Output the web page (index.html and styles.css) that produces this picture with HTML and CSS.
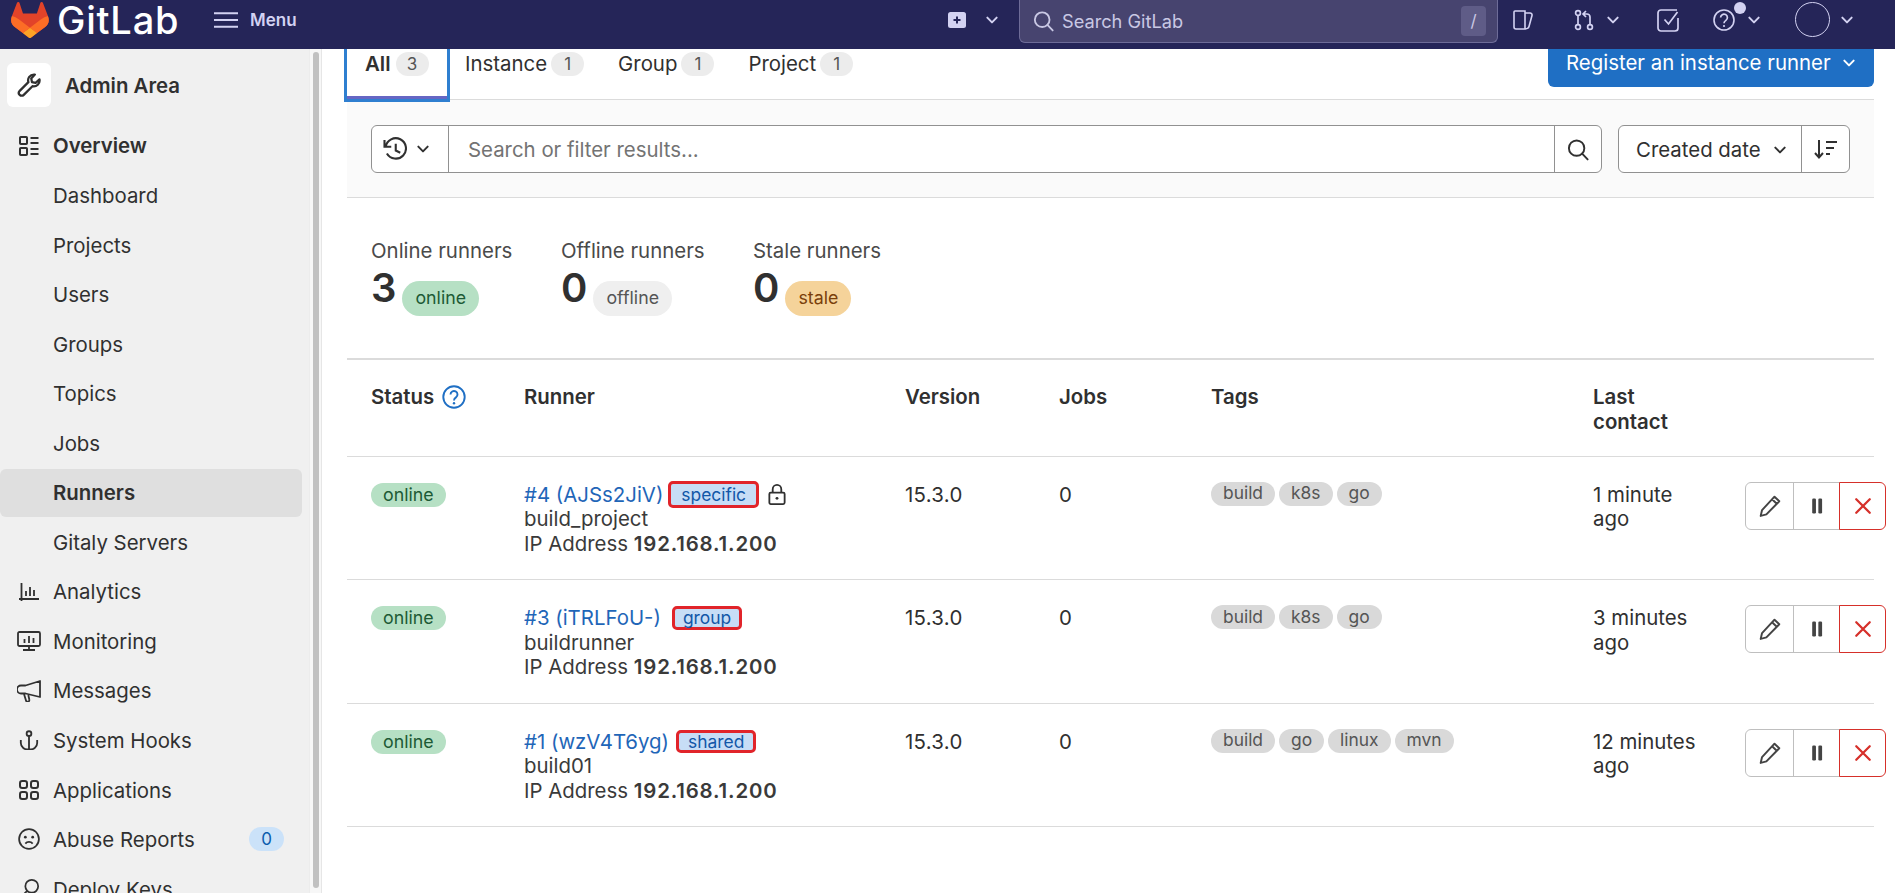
FILE: index.html
```html
<!DOCTYPE html>
<html lang="en">
<head>
<meta charset="utf-8">
<title>Runners · Admin Area · GitLab</title>
<link rel="stylesheet" href="styles.css">
</head>
<body>
<svg class="sprite" aria-hidden="true">
  <symbol id="i-chev" viewBox="0 0 12 12"><path d="M2 4l4 4 4-4" fill="none" stroke="currentColor" stroke-width="1.7" stroke-linecap="round" stroke-linejoin="round"/></symbol>
  <symbol id="i-search" viewBox="0 0 16 16"><circle cx="7" cy="7" r="5.6" fill="none" stroke="currentColor" stroke-width="1.4"/><path d="M11 11l4 4.2" fill="none" stroke="currentColor" stroke-width="1.4" stroke-linecap="round"/></symbol>
  <symbol id="i-pencil" viewBox="0 0 16 16"><path d="M11 1.8l3.2 3L5.6 13.6 1.8 14.6l.9-3.9zM9.4 3.5l3.1 3" fill="none" stroke="currentColor" stroke-width="1.3" stroke-linejoin="round"/></symbol>
  <symbol id="i-pause" viewBox="0 0 16 16"><rect x="4.8" y="3" width="2.5" height="10" rx=".8" fill="currentColor"/><rect x="8.900" y="3" width="2.5" height="10" rx=".8" fill="currentColor"/></symbol>
  <symbol id="i-close" viewBox="0 0 16 16"><path d="M3.500 3.500l9 9M12.500 3.500l-9 9" fill="none" stroke="currentColor" stroke-width="1.5" stroke-linecap="round"/></symbol>
</svg>

<header class="topbar">
  <div class="brand">
    <svg class="logo" viewBox="0 0 25 24" aria-hidden="true">
      <path fill="#E24329" d="m24.507 9.5-.034-.09L21.082.562a.896.896 0 0 0-1.694.091l-2.29 7.01H7.825L5.535.653a.898.898 0 0 0-1.694-.09L.451 9.411.416 9.5a6.297 6.297 0 0 0 2.09 7.278l.012.01.03.022 5.16 3.867 2.56 1.935 1.554 1.176a1.051 1.051 0 0 0 1.268 0l1.555-1.176 2.56-1.935 5.197-3.89.014-.01A6.297 6.297 0 0 0 24.507 9.5Z"/>
      <path fill="#FC6D26" d="m24.507 9.5-.034-.09a11.44 11.44 0 0 0-4.56 2.051l-7.447 5.632 4.742 3.584 5.197-3.89.014-.01A6.297 6.297 0 0 0 24.507 9.5Z"/>
      <path fill="#FCA326" d="m7.707 20.677 2.56 1.935 1.555 1.176a1.051 1.051 0 0 0 1.268 0l1.555-1.176 2.56-1.935-4.743-3.584-4.755 3.584Z"/>
      <path fill="#FC6D26" d="M5.01 11.461a11.43 11.43 0 0 0-4.56-2.05L.416 9.5a6.297 6.297 0 0 0 2.09 7.278l.012.01.03.022 5.16 3.867 4.745-3.584-7.444-5.632Z"/>
    </svg>
    <span class="wordmark">GitLab</span>
  </div>
  <div class="menu">
    <svg class="burger" viewBox="0 0 24 16" aria-hidden="true"><path d="M0 1.2h24M0 8h24M0 14.8h24" stroke="currentColor" stroke-width="2"/></svg>
    <span>Menu</span>
  </div>
  <div class="top-right">
    <svg class="plus" viewBox="0 0 18 16" aria-hidden="true"><rect width="18" height="16" rx="2.5" fill="#d3d2f2"/><path d="M9 4.5v7M5.5 8h7" stroke="#252558" stroke-width="2"/></svg>
    <svg class="chev c-plus"><use href="#i-chev"/></svg>
    <div class="topsearch">
      <svg class="ts-icon"><use href="#i-search"/></svg>
      <span class="ts-text">Search GitLab</span>
      <kbd class="ts-key">/</kbd>
    </div>
    <svg class="nav-i i-issues" viewBox="0 0 21 20" aria-hidden="true"><path d="M2 1h10v18H3a2 2 0 0 1-2-2V2a1 1 0 0 1 1-1zM12 3h5a2 2 0 0 1 2 2.500l-3 11a3 3 0 0 1-4 2" fill="none" stroke="currentColor" stroke-width="1.6"/></svg>
    <svg class="nav-i i-mr" viewBox="0 0 22 22" aria-hidden="true"><g fill="none" stroke="currentColor" stroke-width="1.7"><circle cx="5" cy="4" r="2.4"/><circle cx="5" cy="18" r="2.4"/><circle cx="17" cy="18" r="2.4"/><path d="M5 6.5v9M17 15.500V8a3 3 0 0 0-3-3h-3M13 2l-3 3 3 3"/></g></svg>
    <svg class="chev c-mr"><use href="#i-chev"/></svg>
    <svg class="nav-i i-todo" viewBox="0 0 23 23" aria-hidden="true"><path d="M21 9v10a3 3 0 0 1-3 3H4a3 3 0 0 1-3-3V4a3 3 0 0 1 3-3h16" fill="none" stroke="currentColor" stroke-width="1.7"/><path d="M7.500 10.500l4 4.500 9-12" fill="none" stroke="currentColor" stroke-width="1.7"/></svg>
    <div class="help">
      <svg class="nav-i i-help" viewBox="0 0 22 22" aria-hidden="true"><circle cx="11" cy="11" r="10" fill="none" stroke="currentColor" stroke-width="1.6"/><path d="M7.600 8.600a3.400 3.400 0 1 1 5.300 2.800c-1.200.8-1.900 1.400-1.900 2.800" fill="none" stroke="currentColor" stroke-width="1.7"/><circle cx="11" cy="17" r="1.100" fill="currentColor"/></svg>
      <span class="help-dot"></span>
    </div>
    <svg class="chev c-help"><use href="#i-chev"/></svg>
    <span class="avatar"></span>
    <svg class="chev c-avatar"><use href="#i-chev"/></svg>
  </div>
</header>

<div class="shell">
  <aside class="sidebar">
    <nav class="side-inner">
      <div class="ctx">
        <span class="ctx-tile">
          <svg class="ctx-icon" viewBox="0 0 16 16" aria-hidden="true"><path d="M11.300 1a3.900 3.900 0 0 0-3.700 5.100L1.800 11.900a1.900 1.900 0 0 0 2.700 2.700l5.800-5.800A3.900 3.900 0 0 0 15 4.300l-2.600 2.300-2.400-.5-.5-2.400L11.900 1z" fill="none" stroke="#303030" stroke-width="1.500" stroke-linejoin="round"/></svg>
        </span>
        <span class="ctx-title">Admin Area</span>
      </div>
      <a class="item parent">
        <svg class="s-icon" viewBox="0 0 20 20" aria-hidden="true"><g fill="none" stroke="currentColor" stroke-width="2"><rect x="1" y="1" width="7" height="7" rx=".8"/><rect x="1" y="12" width="7" height="7" rx=".8"/><path d="M11.500 2h8M11.500 7h8M11.500 13h8M11.500 18h8"/></g></svg>
        <span class="label">Overview</span>
      </a>
      <a class="item"><span class="s-gap"></span><span class="label">Dashboard</span></a>
      <a class="item"><span class="s-gap"></span><span class="label">Projects</span></a>
      <a class="item"><span class="s-gap"></span><span class="label">Users</span></a>
      <a class="item"><span class="s-gap"></span><span class="label">Groups</span></a>
      <a class="item"><span class="s-gap"></span><span class="label">Topics</span></a>
      <a class="item"><span class="s-gap"></span><span class="label">Jobs</span></a>
      <a class="item active"><span class="s-gap"></span><span class="label">Runners</span></a>
      <a class="item"><span class="s-gap"></span><span class="label">Gitaly Servers</span></a>
      <a class="item">
        <svg class="s-icon" viewBox="0 0 20 20" aria-hidden="true"><path d="M2.500 1v18M0 17h20M7 9v5M11 5v9M15 8v6" fill="none" stroke="currentColor" stroke-width="1.8"/></svg>
        <span class="label">Analytics</span>
      </a>
      <a class="item">
        <svg class="s-icon wide" viewBox="0 0 24 20" aria-hidden="true"><g fill="none" stroke="currentColor" stroke-width="1.8"><rect x="1" y="1" width="22" height="14" rx="1.500"/><path d="M12 15v4M6 19h12M7.500 8v4M12 5v7M16.500 7v5"/></g></svg>
        <span class="label">Monitoring</span>
      </a>
      <a class="item">
        <svg class="s-icon wide" viewBox="0 0 24 22" aria-hidden="true"><g fill="none" stroke="currentColor" stroke-width="1.8" stroke-linejoin="round"><path d="M23 1v16L8.500 13.500H4a3 3 0 0 1 0-8h4.500z"/><path d="M7 14l2 6.500a1.700 1.700 0 0 0 3.300-1l-1-4.500"/></g></svg>
        <span class="label">Messages</span>
      </a>
      <a class="item">
        <svg class="s-icon" viewBox="0 0 22 22" aria-hidden="true"><g fill="none" stroke="currentColor" stroke-width="2"><circle cx="11" cy="4" r="2.600"/><path d="M11 7v14M2 11v3a7 7 0 0 0 9 7 7 7 0 0 0 9-7v-3"/></g></svg>
        <span class="label">System Hooks</span>
      </a>
      <a class="item">
        <svg class="s-icon" viewBox="0 0 20 20" aria-hidden="true"><g fill="none" stroke="currentColor" stroke-width="2"><rect x="1" y="1" width="7" height="7" rx="2.200"/><rect x="12" y="1" width="7" height="7" rx="2.200"/><rect x="1" y="12" width="7" height="7" rx="2.200"/><rect x="12" y="12" width="7" height="7" rx="2.200"/></g></svg>
        <span class="label">Applications</span>
      </a>
      <a class="item">
        <svg class="s-icon wide" viewBox="0 0 24 24" aria-hidden="true"><circle cx="12" cy="12" r="10.800" fill="none" stroke="currentColor" stroke-width="1.900"/><circle cx="8" cy="10" r="1.500" fill="currentColor"/><circle cx="16" cy="10" r="1.500" fill="currentColor"/><path d="M8 17c2-2.500 6-2.500 8 0" fill="none" stroke="currentColor" stroke-width="1.900"/></svg>
        <span class="label">Abuse Reports</span>
        <span class="count">0</span>
      </a>
      <a class="item">
        <svg class="s-icon wide" viewBox="0 0 24 24" aria-hidden="true"><g fill="none" stroke="currentColor" stroke-width="1.900"><circle cx="15" cy="9" r="7"/><path d="M10 14L2 22M6 18l3 3"/></g></svg>
        <span class="label">Deploy Keys</span>
      </a>
    </nav>
    <div class="track"><div class="thumb"></div></div>
  </aside>

  <main class="main">
    <div class="tabbar">
      <ul class="tabs">
        <li class="tab current"><span>All</span><span class="tab-count">3</span></li>
        <li class="tab"><span>Instance</span><span class="tab-count">1</span></li>
        <li class="tab"><span>Group</span><span class="tab-count">1</span></li>
        <li class="tab"><span>Project</span><span class="tab-count">1</span></li>
      </ul>
      <button class="register">
        <span>Register an instance runner</span>
        <svg class="chev"><use href="#i-chev"/></svg>
      </button>
    </div>

    <div class="filterbar">
      <div class="filter">
        <div class="history">
          <svg class="hist-icon" viewBox="0 0 16 16" aria-hidden="true"><path d="M1.800 6.500A6.800 6.800 0 1 1 2.600 11M1 2v4.500h4.500M8.500 4.500V9l3 1.500" fill="none" stroke="currentColor" stroke-width="1.400"/></svg>
          <svg class="chev"><use href="#i-chev"/></svg>
        </div>
        <div class="filter-input">Search or filter results...</div>
        <div class="filter-go"><svg class="fg-icon"><use href="#i-search"/></svg></div>
      </div>
      <div class="sort">
        <div class="sort-by"><span>Created date</span><svg class="chev"><use href="#i-chev"/></svg></div>
        <div class="sort-dir">
          <svg class="sd-icon" viewBox="0 0 24 20" aria-hidden="true"><path d="M5 1v17M1 14l4 4.500 4-4.500M12 3h11M12 9h8M12 15h4" fill="none" stroke="currentColor" stroke-width="2"/></svg>
        </div>
      </div>
    </div>

    <section class="stats">
      <div class="stat stat-online">
        <div class="stat-label">Online runners</div>
        <div class="stat-value"><b>3</b><span class="pill big online">online</span></div>
      </div>
      <div class="stat stat-offline">
        <div class="stat-label">Offline runners</div>
        <div class="stat-value"><b>0</b><span class="pill big offline">offline</span></div>
      </div>
      <div class="stat">
        <div class="stat-label">Stale runners</div>
        <div class="stat-value"><b>0</b><span class="pill big stale">stale</span></div>
      </div>
    </section>

    <section class="runners">
      <div class="row head">
        <div class="status-head">Status
          <svg class="q" viewBox="0 0 24 24" aria-hidden="true"><circle cx="12" cy="12" r="10.700" fill="none" stroke="#1f6fc4" stroke-width="1.900"/><path d="M8.500 9.500a3.500 3.500 0 1 1 5.500 2.900c-1.300.9-2 1.500-2 3" fill="none" stroke="#1f6fc4" stroke-width="1.900"/><circle cx="12" cy="18.300" r="1.200" fill="#1f6fc4"/></svg>
        </div>
        <div>Runner</div>
        <div>Version</div>
        <div>Jobs</div>
        <div>Tags</div>
        <div>Last<br>contact</div>
        <div></div>
      </div>

      <div class="row body">
        <div><span class="pill online">online</span></div>
        <div class="runner">
          <div class="r-title"><a class="r-link">#4 (AJSs2JiV)</a><span class="type t-specific">specific</span>
            <svg class="lock" viewBox="0 0 18 22" aria-hidden="true"><g fill="none" stroke="#303030" stroke-width="1.900"><rect x="1" y="9" width="16" height="12" rx="1.500"/><path d="M4.500 9V5.500a4.500 4.500 0 0 1 9 0V9"/></g><circle cx="9" cy="15" r="1.500" fill="#303030"/></svg>
          </div>
          <div>build_project</div>
          <div>IP Address <b class="ip">192.168.1.200</b></div>
        </div>
        <div class="cell ver">15.3.0</div>
        <div class="cell">0</div>
        <div class="tags"><span class="tag">build</span><span class="tag">k8s</span><span class="tag">go</span></div>
        <div class="cell">1 minute<br>ago</div>
        <div class="actions">
          <button class="act"><svg class="act-i"><use href="#i-pencil"/></svg></button>
          <button class="act"><svg class="act-i"><use href="#i-pause"/></svg></button>
          <button class="act danger"><svg class="act-i"><use href="#i-close"/></svg></button>
        </div>
      </div>

      <div class="row body">
        <div><span class="pill online">online</span></div>
        <div class="runner">
          <div class="r-title"><a class="r-link">#3 (iTRLFoU-)</a><span class="type t-group">group</span></div>
          <div>buildrunner</div>
          <div>IP Address <b class="ip">192.168.1.200</b></div>
        </div>
        <div class="cell ver">15.3.0</div>
        <div class="cell">0</div>
        <div class="tags"><span class="tag">build</span><span class="tag">k8s</span><span class="tag">go</span></div>
        <div class="cell">3 minutes<br>ago</div>
        <div class="actions">
          <button class="act"><svg class="act-i"><use href="#i-pencil"/></svg></button>
          <button class="act"><svg class="act-i"><use href="#i-pause"/></svg></button>
          <button class="act danger"><svg class="act-i"><use href="#i-close"/></svg></button>
        </div>
      </div>

      <div class="row body">
        <div><span class="pill online">online</span></div>
        <div class="runner">
          <div class="r-title"><a class="r-link">#1 (wzV4T6yg)</a><span class="type t-shared">shared</span></div>
          <div>build01</div>
          <div>IP Address <b class="ip">192.168.1.200</b></div>
        </div>
        <div class="cell ver">15.3.0</div>
        <div class="cell">0</div>
        <div class="tags"><span class="tag">build</span><span class="tag">go</span><span class="tag">linux</span><span class="tag">mvn</span></div>
        <div class="cell">12 minutes<br>ago</div>
        <div class="actions">
          <button class="act"><svg class="act-i"><use href="#i-pencil"/></svg></button>
          <button class="act"><svg class="act-i"><use href="#i-pause"/></svg></button>
          <button class="act danger"><svg class="act-i"><use href="#i-close"/></svg></button>
        </div>
      </div>
    </section>
  </main>
</div>
</body>
</html>
```

FILE: styles.css
```css
* { box-sizing: border-box; }
html, body { margin: 0; height: 100%; overflow: hidden; }
body { font-family: Inter, "Noto Sans", sans-serif; font-size: 20.4px; color: #303030; background: #fff; line-height: 24.6px; }
button { font: inherit; }
.sprite { display: none; }
.chev { width: 14px; height: 14px; flex: none; color: inherit; }

/* top bar */
.topbar { height: 49px; padding-bottom: 9px; background: #252558; display: flex; align-items: center; color: #d3d2f2; }
.brand { display: flex; align-items: center; width: 214px; padding-left: 11px; flex: none; }
.logo { width: 38px; height: 36px; flex: none; }
.wordmark { color: #fff; font-size: 38px; font-weight: 500; letter-spacing: .8px; margin-left: 8px; line-height: 40px; }
.menu { display: flex; align-items: center; gap: 12px; font-size: 17px; font-weight: 600; width: 120px; flex: none; }
.burger { width: 24px; height: 16px; }
.top-right { display: flex; align-items: center; margin-left: auto; height: 40px; padding-right: 41px; }
.plus { width: 18px; height: 16px; }
.c-plus { margin-left: 19px; }
.topsearch { width: 479px; height: 43px; align-self: flex-start; margin-left: 20px; background: #47446f; border: 1px solid #6e6c98; border-top: 0; border-radius: 0 0 6px 6px; display: flex; align-items: center; padding-left: 13px; color: #c9c8e4; }
.ts-icon { width: 21px; height: 22px; flex: none; }
.ts-text { margin-left: 8px; font-size: 18.2px; }
.ts-key { margin-left: auto; margin-right: 11px; width: 25px; height: 30px; background: #5f5c87; border-radius: 4px; display: flex; align-items: center; justify-content: center; font: 400 17px Inter, sans-serif; }
.nav-i { flex: none; }
.i-issues { width: 21px; height: 20px; margin-left: 15px; }
.i-mr { width: 22px; height: 22px; margin-left: 39px; }
.c-mr { margin-left: 11px; }
.i-todo { width: 23px; height: 23px; margin-left: 37px; }
.help { position: relative; margin-left: 33px; width: 22px; height: 22px; }
.i-help { width: 22px; height: 22px; display: block; }
.help-dot { position: absolute; top: -7px; right: -11px; width: 12px; height: 12px; border-radius: 50%; background: #d3d2f2; }
.c-help { margin-left: 12px; }
.avatar { width: 35px; height: 35px; border: 1px solid #d3d2f2; border-radius: 50%; margin-left: 34px; margin-top: -2px; flex: none; }
.c-avatar { margin-left: 10px; }

/* shell */
.shell { display: flex; height: 844px; }

/* sidebar */
.sidebar { width: 322px; flex: none; display: flex; background: #f0f0f0; overflow: hidden; }
.side-inner { width: 309px; flex: none; padding-top: 14px; }
.track { width: 13px; flex: none; background: #f7f7f7; padding: 3px 2px 5px 3px; border-left: 1px solid #ececec; border-right: 1px solid #e6e6e6; }
.thumb { height: 100%; background: #c1c1c1; border-radius: 4px; }
.ctx { display: flex; align-items: center; height: 44px; padding-left: 7px; margin-bottom: 14px; }
.ctx-tile { width: 44px; height: 44px; background: #fff; border-radius: 6px; display: flex; align-items: center; justify-content: center; }
.ctx-icon { width: 24px; height: 24px; }
.ctx-title { margin-left: 14px; margin-top: 2px; font-weight: 600; font-size: 20.4px; }
.item { display: flex; align-items: center; height: 49.55px; padding-left: 19px; margin-right: 7px; border-radius: 6px; white-space: nowrap; }
.label { padding-top: 2px; }
.item.parent { font-weight: 600; }
.item.active { background: #dfdfdf; font-weight: 600; height: 48px; margin-top: .78px; margin-bottom: .77px; }
.s-icon { width: 20px; height: 20px; flex: none; margin-right: 14px; color: #303030; }
.s-icon.wide { width: 24px; height: 22px; margin-left: -2px; margin-right: 12px; }
.s-gap { width: 34px; flex: none; }
.count { margin-left: auto; margin-right: 18px; width: 35px; height: 24px; background: #cbe2f9; color: #0b5cad; border-radius: 12px; font-size: 17px; display: flex; align-items: center; justify-content: center; }

/* main */
.main { flex: 1; min-width: 0; padding: 0 21px 0 25px; overflow: hidden; }
.tabbar { display: flex; justify-content: space-between; height: 51px; border-bottom: 1px solid #dbdbdb; }
.tabs { list-style: none; margin: 0; padding: 0; display: flex; }
.tab { display: flex; align-items: flex-start; padding-top: 3px; height: 50px; padding-left: 18px; padding-right: 16px; gap: 4px; }
.tab.current { font-weight: 600; width: 100px; padding-left: 18px; gap: 5px; box-shadow: 0 0 0 3px #2f7fd0, inset 0 -3px 0 #6666c4; position: relative; z-index: 1; }
.tab-count { width: 33px; height: 24px; background: #ececec; color: #555; font-weight: 400; font-size: 17px; border-radius: 12px; display: flex; align-items: center; justify-content: center; }
.register { width: 326px; height: 38px; background: #1f6fc4; color: #fff; border: 0; border-radius: 0 0 6px 6px; display: flex; align-items: center; justify-content: space-between; padding: 0 18px 10px; }

.filterbar { height: 98px; background: #fafafa; border-bottom: 1px solid #dbdbdb; padding: 25px 24px 0; display: flex; gap: 16px; }
.filter, .sort { display: flex; height: 48px; background: #fff; border: 1px solid #919191; border-radius: 6px; }
.filter { width: 1231px; flex: none; }
.sort { width: 232px; flex: none; }
.history { width: 77px; flex: none; display: flex; align-items: center; gap: 9px; padding-left: 11px; border-right: 1px solid #919191; }
.hist-icon { width: 24px; height: 24px; flex: none; }
.filter-input { flex: 1; padding: 2px 0 0 19px; color: #737373; display: flex; align-items: center; }
.filter-go { width: 47px; flex: none; border-left: 1px solid #919191; display: flex; align-items: center; justify-content: center; }
.fg-icon { width: 22px; height: 23px; }
.sort-by { flex: 1; display: flex; align-items: center; gap: 12px; padding: 2px 0 0 17px; border-right: 1px solid #919191; }
.sort-dir { width: 47px; flex: none; display: flex; align-items: center; justify-content: center; }
.sd-icon { width: 24px; height: 20px; }

/* stats */
.stats { display: flex; padding: 41px 0 0 24px; height: 162px; border-bottom: 2px solid #dbdbdb; }
.stat-online { width: 190px; }
.stat-offline { width: 192px; }
.stat-label { color: #4a4a4a; }
.stat-value { display: flex; align-items: flex-start; }
.stat-value b { font-size: 40px; font-weight: 600; line-height: 47px; }
.pill { display: inline-flex; align-items: center; justify-content: center; height: 24px; padding: 0 12px; border-radius: 12px; font-size: 17.8px; }
.pill.big { height: 35px; border-radius: 18px; padding: 0 13px; margin: 17px 0 0 6px; }
.online { background: #b6e0c4; color: #1d5a35; }
.offline { background: #efefef; color: #555; }
.stale { background: #f5d39a; color: #7a3f0b; }

/* table */
.row { display: grid; grid-template-columns: 153px 381px 154px 152px 382px 153px 140px; padding-left: 24px; }
.head { height: 96.5px; padding-top: 25px; font-weight: 600; border-bottom: 1px solid #dbdbdb; }
.status-head { display: flex; align-items: flex-start; gap: 8px; }
.q { width: 24px; height: 24px; flex: none; }
.body { height: 123.6px; padding-top: 25px; border-bottom: 1.5px solid #dbdbdb; }
.runner { color: #3a3a3a; padding-top: 1px; }
.cell { padding-top: 1px; }
.ver { letter-spacing: .3px; }
.r-title { display: flex; align-items: center; height: 24.6px; }
.r-link { color: #1f66b8; }
.ip { font-weight: 600; letter-spacing: .85px; }
.type { display: inline-flex; align-items: center; height: 27px; margin-left: 5px; padding: 0 10px; background: #c7ddf6; color: #1257a8; border: 3px solid #e1242a; border-radius: 5px; font-size: 17.4px; }
.t-group { height: 24px; margin-left: 11px; padding: 0 8px; }
.t-shared { height: 23px; margin-left: 7px; padding: 0 9px; }
.lock { width: 18px; height: 21px; margin-left: 9px; }
.tags { display: flex; gap: 4px; align-items: flex-start; }
.tag { height: 24px; padding: 0 12px; border-radius: 12px; background: #d9d9d9; color: #555; font-size: 17.4px; display: flex; align-items: center; }
.actions { display: flex; height: 48px; margin-left: -1px; }
.act { width: 47px; height: 48px; padding: 0; background: #fff; border: 1px solid #bfbfbf; margin-left: -1px; display: flex; align-items: center; justify-content: center; color: #444; }
.act:first-child { margin-left: 0; width: 49px; border-radius: 6px 0 0 6px; }
.act.danger { border-color: #d6302a; color: #d6302a; border-radius: 0 6px 6px 0; position: relative; }
.act-i { width: 24px; height: 24px; }
```
